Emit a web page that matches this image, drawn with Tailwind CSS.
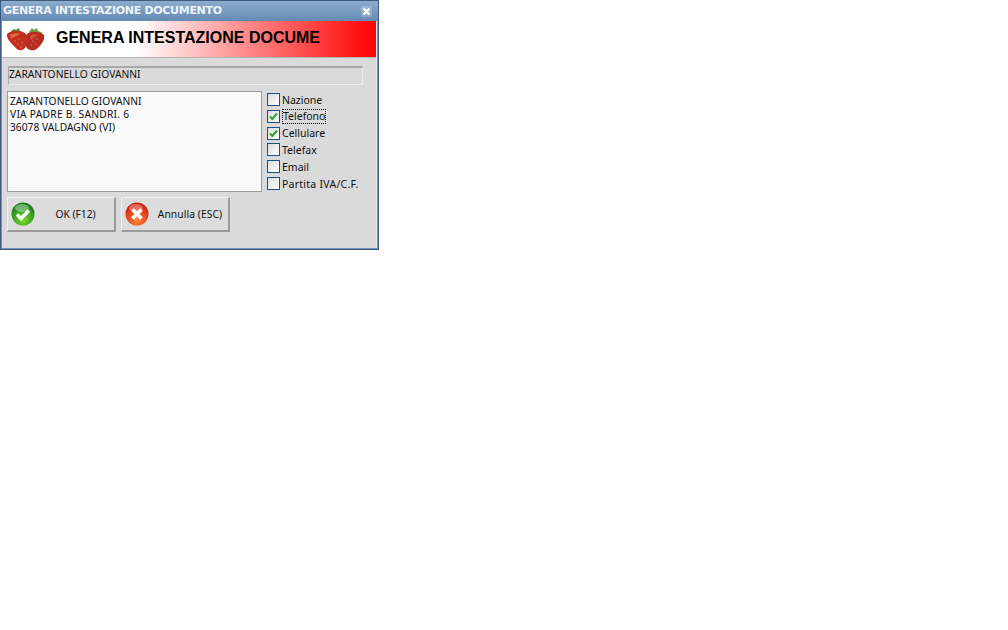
<!DOCTYPE html>
<html>
<head>
<meta charset="utf-8">
<script src="https://cdn.jsdelivr.net/npm/@tailwindcss/browser@4"></script>
</head>
<body class="bg-white">
<div class="w-[379px] h-[250px] flex flex-col border border-[#3d5a80] bg-[#6f93bb] font-['Noto_Sans',sans-serif] text-[10.25px] text-[#111]">
  <div class="h-[20px] shrink-0 flex items-center justify-between pl-[2px] pr-[6px] bg-gradient-to-b from-[#8daccd] to-[#648ab3]">
    <span class="font-['DejaVu_Sans',sans-serif] font-bold text-[11px] tracking-[-0.3px] text-[#eef3f8] whitespace-nowrap">GENERA INTESTAZIONE DOCUMENTO</span>
    <svg width="11" height="11" viewBox="0 0 11 11" class="bg-white/20"><path d="M2.5 2.5l6 6M8.5 2.5l-6 6" stroke="#fff" stroke-width="2.2"/></svg>
  </div>
  <div class="flex-1 flex flex-col mx-[1px] mb-[1px] bg-[#dadada] border-r border-[#e9e9e9]">
    <div class="h-[37px] shrink-0 flex items-center border-b border-[#b5b5b5] bg-[linear-gradient(to_right,#fff_0%,#fff_36%,#ff0000_100%)]">
      <svg width="38" height="25" viewBox="0 0 38 25" class="ml-[5px] shrink-0">
        <path d="M22 5l3-4 2 2 3-2 1 3 5 2-5 2-5 1z" fill="#6f9a48"/>
        <path d="M4 4l3-2 2 1 3-2 1 3 3 1-5 3-5-1z" fill="#55802f"/>
        <path d="M20 7c4-3 12-3 17 1 1 5-3 11-9 15-3 1-8 0-9-4-1-4 0-9 1-12z" fill="#b42d20"/>
        <path d="M0 7c3-4 16-4 19 0 3 4 2 11-2 15-3 2-6 2-9-2C5 17-1 12 0 7z" fill="#c32f1e"/>
        <path d="M3 8c3-2 8-2 10-1-2 2-7 3-9 5z" fill="#e2654c"/>
        <path d="M23 9c2-2 6-2 8-1-2 1-5 3-7 5z" fill="#d4543e"/>
        <g fill="#f0b89a"><circle cx="8" cy="14" r=".6"/><circle cx="12" cy="12" r=".6"/><circle cx="15" cy="15" r=".6"/><circle cx="11" cy="17" r=".6"/><circle cx="14" cy="20" r=".6"/><circle cx="26" cy="14" r=".6"/><circle cx="30" cy="12" r=".6"/><circle cx="29" cy="17" r=".6"/><circle cx="24" cy="18" r=".6"/></g>
      </svg>
      <span class="ml-[11px] pb-[2px] font-['Liberation_Sans',sans-serif] font-bold text-[16px] text-black whitespace-nowrap">GENERA INTESTAZIONE DOCUME</span>
    </div>
    <div class="flex-1 flex flex-col pl-[5px] pt-[8px]">
      <div class="ml-[1px] w-[355px] h-[19px] flex items-center pb-[2px] border border-t-2 border-[#a8a8a8] border-r-[#ececec] border-b-[#ececec] bg-[#dadada]">ZARANTONELLO GIOVANNI</div>
      <div class="flex mt-[6px]">
        <div class="w-[255px] h-[101px] pl-[2px] pt-[3px] bg-[#f9f9f9] border border-[#9c9c9c] leading-[13px]">ZARANTONELLO GIOVANNI<br><span class="tracking-[0.25px]">VIA PADRE B. SANDRI. 6</span><br>36078 VALDAGNO (VI)</div>
        <div class="ml-[5px] pt-[2px] flex flex-col gap-[3.8px] text-[10.5px]">
          <div class="flex items-center h-[13px]"><span class="w-[13px] h-[13px] border border-[#1f4f7f] bg-gradient-to-br from-[#dcdcdc] to-white"></span><span class="ml-[2px] pt-[2px]">Nazione</span></div>
          <div class="flex items-center h-[13px]"><span class="w-[13px] h-[13px] border border-[#1f4f7f] bg-gradient-to-br from-[#dcdcdc] to-white flex items-center justify-center"><svg width="9" height="9" viewBox="0 0 9 9"><path d="M1 4.5l2.3 2.5L8 1.5" fill="none" stroke="#2fa32f" stroke-width="2"/></svg></span><span class="ml-[2px] border border-dotted border-black leading-[13px]">Telefono</span></div>
          <div class="flex items-center h-[13px]"><span class="w-[13px] h-[13px] border border-[#1f4f7f] bg-gradient-to-br from-[#dcdcdc] to-white flex items-center justify-center"><svg width="9" height="9" viewBox="0 0 9 9"><path d="M1 4.5l2.3 2.5L8 1.5" fill="none" stroke="#2fa32f" stroke-width="2"/></svg></span><span class="ml-[2px] pt-[2px]">Cellulare</span></div>
          <div class="flex items-center h-[13px]"><span class="w-[13px] h-[13px] border border-[#1f4f7f] bg-gradient-to-br from-[#dcdcdc] to-white"></span><span class="ml-[2px] pt-[2px]">Telefax</span></div>
          <div class="flex items-center h-[13px]"><span class="w-[13px] h-[13px] border border-[#1f4f7f] bg-gradient-to-br from-[#dcdcdc] to-white"></span><span class="ml-[2px] pt-[2px]">Email</span></div>
          <div class="flex items-center h-[13px]"><span class="w-[13px] h-[13px] border border-[#1f4f7f] bg-gradient-to-br from-[#dcdcdc] to-white"></span><span class="ml-[2px] pt-[2px] whitespace-nowrap tracking-[0.25px]">Partita IVA/C.F.</span></div>
        </div>
      </div>
      <div class="flex gap-[5px] mt-[5px]">
        <div class="w-[109px] h-[35px] flex items-center border border-[#f0f0f0] border-r-2 border-b-2 border-r-[#9a9a9a] border-b-[#9a9a9a] bg-[#dcdcdc]">
          <svg width="24" height="24" viewBox="0 0 24 24" class="ml-[3px] shrink-0"><defs><radialGradient id="g" cx="50%" cy="75%" r="70%"><stop offset="0" stop-color="#7edc2c"/><stop offset="1" stop-color="#0f7a1a"/></radialGradient></defs><circle cx="12" cy="12" r="11.5" fill="url(#g)"/><ellipse cx="11" cy="6" rx="7" ry="4" fill="#fff" opacity=".35"/><path d="M6 12.5l4 4 8-8" fill="none" stroke="#fff" stroke-width="3.4"/></svg>
          <span class="flex-1 text-center pl-[2px] pt-[2px]">OK (F12)</span>
        </div>
        <div class="w-[109px] h-[35px] flex items-center border border-[#f0f0f0] border-r-2 border-b-2 border-r-[#9a9a9a] border-b-[#9a9a9a] bg-[#dcdcdc]">
          <svg width="24" height="24" viewBox="0 0 24 24" class="ml-[3px] shrink-0"><defs><radialGradient id="r" cx="50%" cy="75%" r="70%"><stop offset="0" stop-color="#ff8a3a"/><stop offset="1" stop-color="#d01a10"/></radialGradient></defs><circle cx="12" cy="12" r="11.5" fill="url(#r)"/><ellipse cx="11" cy="6" rx="7" ry="4" fill="#fff" opacity=".3"/><path d="M7.5 7.5l9 9M16.5 7.5l-9 9" fill="none" stroke="#fff" stroke-width="3.8"/></svg>
          <span class="flex-1 text-center pl-[3px] pt-[2px] tracking-[0.1px]">Annulla (ESC)</span>
        </div>
      </div>
    </div>
  </div>
</div>
</body>
</html>
